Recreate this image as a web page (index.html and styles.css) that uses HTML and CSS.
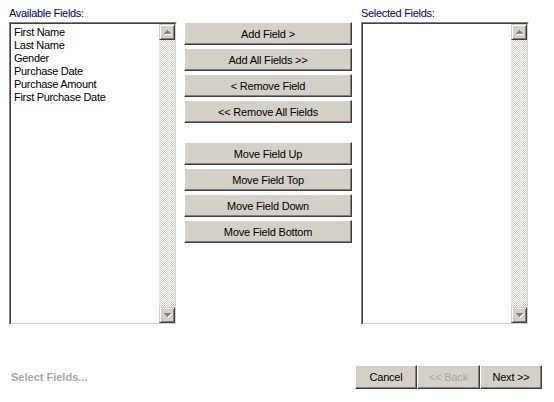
FILE: index.html
```html
<!DOCTYPE html>
<html lang="en">
<head>
  <meta charset="UTF-8" />
  <meta name="viewport" content="width=device-width, initial-scale=1.0"/>
  <title>Select Fields</title>
  <link rel="stylesheet" href="styles.css">
</head>
<body>

  <div class="wizard">
    <div class="picker">

      <!-- Available fields -->
      <div class="side">
        <div class="caption">Available Fields:</div>
        <div class="listbox">
          <div class="listbox-inner">
            <ul class="items">
              <li>First Name</li>
              <li>Last Name</li>
              <li>Gender</li>
              <li>Purchase Date</li>
              <li>Purchase Amount</li>
              <li>First Purchase Date</li>
            </ul>
            <div class="scrollbar">
              <div class="arrow">
                <svg width="8" height="5" viewBox="0 0 8 5">
                  <path fill="#fff" transform="translate(1 1)" d="M3 0H4V1H5V2H6V3H7V4H0V3H1V2H2V1H3Z"/>
                  <path fill="#808080" d="M3 0H4V1H5V2H6V3H7V4H0V3H1V2H2V1H3Z"/>
                </svg>
              </div>
              <div class="track"></div>
              <div class="arrow">
                <svg width="8" height="5" viewBox="0 0 8 5">
                  <path fill="#fff" transform="translate(1 1)" d="M0 0H7V1H6V2H5V3H4V4H3V3H2V2H1V1H0Z"/>
                  <path fill="#808080" d="M0 0H7V1H6V2H5V3H4V4H3V3H2V2H1V1H0Z"/>
                </svg>
              </div>
            </div>
          </div>
        </div>
      </div>

      <!-- Move buttons -->
      <div class="actions">
        <div class="btn-group">
          <button class="btn">Add Field &gt;</button>
          <button class="btn">Add All Fields &gt;&gt;</button>
          <button class="btn">&lt; Remove Field</button>
          <button class="btn">&lt;&lt; Remove All Fields</button>
        </div>
        <div class="btn-group order">
          <button class="btn">Move Field Up</button>
          <button class="btn">Move Field Top</button>
          <button class="btn">Move Field Down</button>
          <button class="btn">Move Field Bottom</button>
        </div>
      </div>

      <!-- Selected fields -->
      <div class="side selected">
        <div class="caption">Selected Fields:</div>
        <div class="listbox">
          <div class="listbox-inner">
            <ul class="items"></ul>
            <div class="scrollbar">
              <div class="arrow">
                <svg width="8" height="5" viewBox="0 0 8 5">
                  <path fill="#fff" transform="translate(1 1)" d="M3 0H4V1H5V2H6V3H7V4H0V3H1V2H2V1H3Z"/>
                  <path fill="#808080" d="M3 0H4V1H5V2H6V3H7V4H0V3H1V2H2V1H3Z"/>
                </svg>
              </div>
              <div class="track"></div>
              <div class="arrow">
                <svg width="8" height="5" viewBox="0 0 8 5">
                  <path fill="#fff" transform="translate(1 1)" d="M0 0H7V1H6V2H5V3H4V4H3V3H2V2H1V1H0Z"/>
                  <path fill="#808080" d="M0 0H7V1H6V2H5V3H4V4H3V3H2V2H1V1H0Z"/>
                </svg>
              </div>
            </div>
          </div>
        </div>
      </div>

    </div>

    <div class="footer">
      <span class="status">Select Fields...</span>
      <div class="nav">
        <button class="btn nav-btn">Cancel</button>
        <button class="btn nav-btn back" disabled>&lt;&lt; Back</button>
        <button class="btn nav-btn">Next &gt;&gt;</button>
      </div>
    </div>
  </div>

</body>
</html>
```

FILE: styles.css
```css
* {
  margin: 0;
  padding: 0;
  box-sizing: border-box;
  font-family: 'Liberation Sans', Arial, sans-serif;
}

body {
  background: #fff;
  color: #000;
  font-size: 11px;
}

.wizard {
  padding: 7px 12px 0 9px;
}

.picker {
  display: flex;
  align-items: flex-start;
}

.side {
  width: 168px;
}

.side.selected {
  margin-left: 9px;
}

.caption {
  height: 13px;
  line-height: 13px;
  margin-bottom: 2px;
  color: #000080;
  letter-spacing: -0.3px;
}

/* sunken list box, two border rings */
.listbox {
  height: 303px;
  border: 1px solid;
  border-color: #808080 #fff #fff #808080;
}

.listbox-inner {
  display: flex;
  height: 100%;
  border: 1px solid;
  border-color: #404040 #d4d0c8 #d4d0c8 #404040;
}

.items {
  flex: 1;
  list-style: none;
  padding: 2px 0 0 3px;
}

.items li {
  height: 13px;
  line-height: 13px;
  letter-spacing: -0.3px;
  white-space: nowrap;
}

.scrollbar {
  width: 16px;
  display: flex;
  flex-direction: column;
}

.track {
  flex: 1;
  background: repeating-conic-gradient(#fff 0 25%, #d4d0c8 0 50%) 0 0 / 2px 2px;
}

.arrow {
  width: 16px;
  height: 16px;
  display: flex;
  justify-content: center;
  align-items: center;
  background: #d4d0c8;
  border: 1px solid;
  border-color: #d4d0c8 #404040 #404040 #d4d0c8;
  box-shadow: inset 1px 1px #fff, inset -1px -1px #808080;
}

.arrow svg {
  display: block;
  margin-left: 1px;
}

.actions {
  width: 168px;
  margin-left: 7px;
  padding-top: 15px;
}

.btn-group {
  display: flex;
  flex-direction: column;
  gap: 3px;
}

.btn-group.order {
  margin-top: 19px;
}

.btn {
  height: 23px;
  background: #d4d0c8;
  border: 1px solid;
  border-color: #fff #404040 #404040 #fff;
  box-shadow: inset -1px -1px #808080;
  font-size: 11px;
  letter-spacing: -0.2px;
  color: #000;
  text-align: center;
}

.footer {
  display: flex;
  justify-content: space-between;
  align-items: center;
  margin-top: 40px;
}

.status {
  padding-left: 2px;
  font-weight: bold;
  color: #a8a8a8;
}

.nav {
  display: flex;
}

.nav-btn {
  width: 62px;
  height: 24px;
}

.nav-btn.back {
  width: 63px;
  color: #a8a8a8;
}
```
